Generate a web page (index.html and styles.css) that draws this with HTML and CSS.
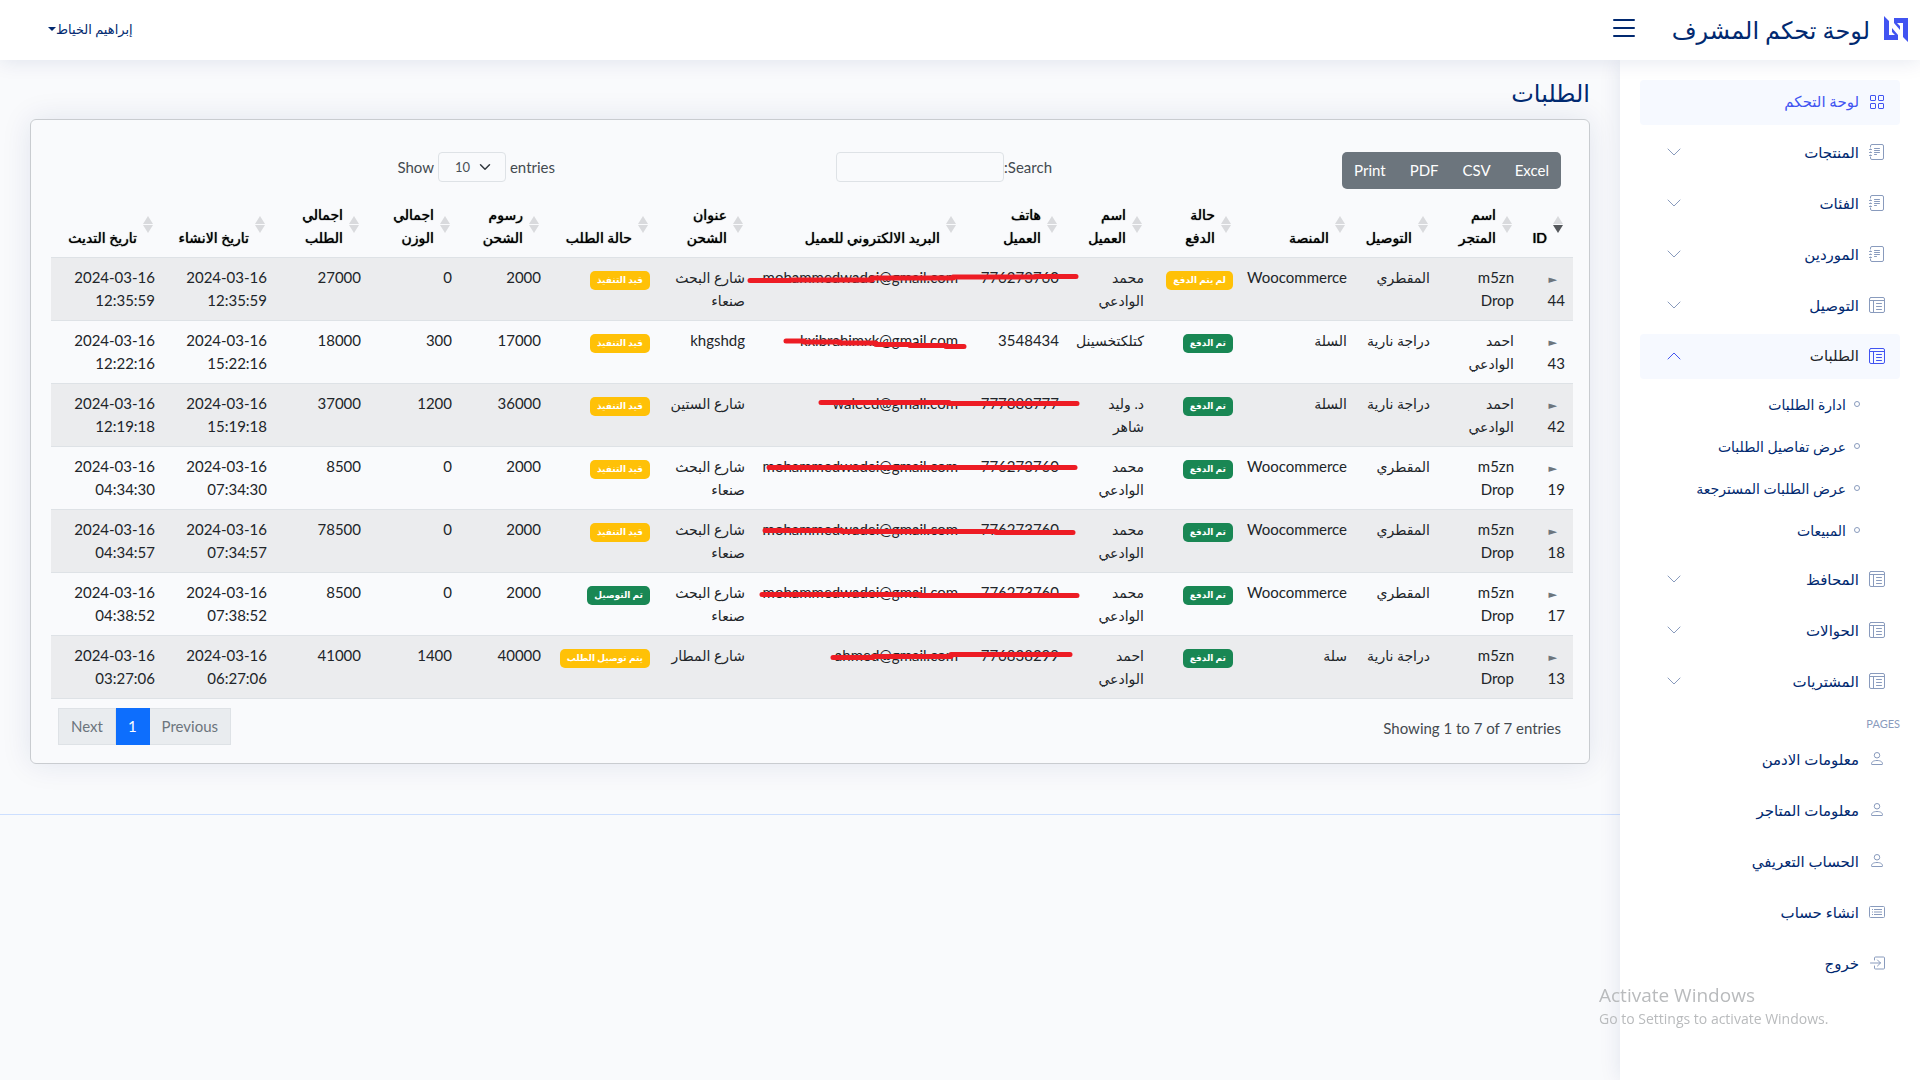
FILE: index.html
```html
<!DOCTYPE html>
<html lang="ar" dir="rtl">
<head>
<meta charset="utf-8">
<title>لوحة تحكم المشرف</title>
<link rel="stylesheet" href="styles.css">
</head>
<body>
<svg class="sprite" aria-hidden="true">
  <symbol id="grid" viewBox="0 0 16 16"><g fill="none" stroke="currentColor"><rect x="1.500" y="1.500" width="5" height="5" rx=".5"/><rect x="9.500" y="1.500" width="5" height="5" rx=".5"/><rect x="1.500" y="9.500" width="5" height="5" rx=".5"/><rect x="9.500" y="9.500" width="5" height="5" rx=".5"/></g></symbol>
  <symbol id="journal" viewBox="0 0 16 16"><path fill="none" stroke="currentColor" stroke-linecap="round" d="M1.500 3V2a1.500 1.500 0 0 1 1.500-1.500h10A1.500 1.500 0 0 1 14.500 2v12a1.500 1.500 0 0 1-1.500 1.500H3A1.500 1.500 0 0 1 1.500 14v-1M1.500 5v.5M1.500 8v.5M1.500 11v.5M.5 5.500h2M.5 8.500h2M.5 11.500h2M5.500 4.500h5M5.500 6.500h5M5.500 8.500h5M5.500 10.500h2"/></symbol>
  <symbol id="layout" viewBox="0 0 16 16"><path fill="none" stroke="currentColor" stroke-linecap="round" d="M2 .5h12A1.500 1.500 0 0 1 15.500 2v12a1.500 1.500 0 0 1-1.500 1.500H2A1.500 1.500 0 0 1 .5 14V2A1.500 1.500 0 0 1 2 .5zM.5 3.500h15M4.500 3.500v12M7.500 6.500h5M7.500 9.500h5M7.500 12.500h5"/></symbol>
  <symbol id="person" viewBox="0 0 16 16"><path fill="none" stroke="currentColor" d="M8 1.500a2.500 2.500 0 1 1 0 5.500 2.500 2.500 0 0 1 0-5.500zM2.500 13c0-2 1.500-3.500 5.500-3.500s5.500 1.500 5.500 3.500c0 .4-.2.500-.5.500H3c-.3 0-.5-.1-.5-.5z"/></symbol>
  <symbol id="card" viewBox="0 0 16 16"><path fill="none" stroke="currentColor" d="M1.500 2.500h13a1 1 0 0 1 1 1v9a1 1 0 0 1-1 1h-13a1 1 0 0 1-1-1v-9a1 1 0 0 1 1-1zM5 5.500h8M5 8h8M5 10.500h8M3 5.500h1M3 8h1M3 10.500h1"/></symbol>
  <symbol id="exit" viewBox="0 0 16 16"><path fill="none" stroke="currentColor" stroke-linecap="round" stroke-linejoin="round" d="M5.500 5V3A1 1 0 0 1 6.500 2h8a1 1 0 0 1 1 1v10a1 1 0 0 1-1 1h-8a1 1 0 0 1-1-1v-2M1.500 8h10M8.500 5l3 3-3 3"/></symbol>
  <symbol id="down" viewBox="0 0 16 16"><path fill="none" stroke="currentColor" stroke-linecap="round" stroke-linejoin="round" d="M2 5l6 6 6-6"/></symbol>
</svg>

<header class="topbar">
  <a class="brand" href="#">
    <svg width="24" height="26" viewBox="0 0 24 26" fill="#4154f1"><path d="M0 0l5 5v14h6l-3-3v-4l6 7v5H0zM24 26l-5-5V7h-6l3 3v4l-6-7V2h14z"/></svg>
    <span>لوحة تحكم المشرف</span>
  </a>
  <button class="toggle" type="button" aria-label="القائمة"><svg width="32" height="32" viewBox="0 0 16 16"><path d="M3 4h10M3 8h10M3 12h10" stroke="currentColor" stroke-linecap="round"/></svg></button>
  <button class="user" type="button">إبراهيم الخياط<i></i></button>
</header>

<div class="layout">
<aside class="sidebar">
  <nav>
    <a class="item current" href="#"><svg><use href="#grid"/></svg>لوحة التحكم</a>
    <a class="item" href="#"><svg><use href="#journal"/></svg>المنتجات<svg class="chev"><use href="#down"/></svg></a>
    <a class="item" href="#"><svg><use href="#journal"/></svg>الفئات<svg class="chev"><use href="#down"/></svg></a>
    <a class="item" href="#"><svg><use href="#journal"/></svg>الموردين<svg class="chev"><use href="#down"/></svg></a>
    <a class="item" href="#"><svg><use href="#layout"/></svg>التوصيل<svg class="chev"><use href="#down"/></svg></a>
    <a class="item open" href="#"><svg><use href="#layout"/></svg>الطلبات<svg class="chev"><use href="#down"/></svg></a>
    <ul class="sub">
      <li><a href="#">ادارة الطلبات</a></li>
      <li><a href="#">عرض تفاصيل الطلبات</a></li>
      <li><a href="#">عرض الطلبات المسترجعة</a></li>
      <li><a href="#">المبيعات</a></li>
    </ul>
    <a class="item" href="#"><svg><use href="#layout"/></svg>المحافظ<svg class="chev"><use href="#down"/></svg></a>
    <a class="item" href="#"><svg><use href="#layout"/></svg>الحوالات<svg class="chev"><use href="#down"/></svg></a>
    <a class="item" href="#"><svg><use href="#layout"/></svg>المشتريات<svg class="chev"><use href="#down"/></svg></a>
    <div class="heading">PAGES</div>
    <a class="item" href="#"><svg><use href="#person"/></svg>معلومات الادمن</a>
    <a class="item" href="#"><svg><use href="#person"/></svg>معلومات المتاجر</a>
    <a class="item" href="#"><svg><use href="#person"/></svg>الحساب التعريفي</a>
    <a class="item" href="#"><svg><use href="#card"/></svg>انشاء حساب</a>
    <a class="item" href="#"><svg><use href="#exit"/></svg>خروج</a>
  </nav>
</aside>

<div class="page">
<main>
  <h1>الطلبات</h1>
  <section class="card">
    <div class="tools">
      <div><div class="buttons"><button type="button">Excel</button><button type="button">CSV</button><button type="button">PDF</button><button type="button">Print</button></div></div>
      <div><label class="search">Search:<input type="search"></label></div>
      <div><label class="length" dir="ltr">Show <select><option>10</option><option>25</option></select> entries</label></div>
    </div>
    <table>
      <colgroup><col style="width:51px"><col style="width:84px"><col style="width:83px"><col style="width:114px"><col style="width:89px"><col style="width:85px"><col style="width:101px"><col style="width:213px"><col style="width:95px"><col style="width:109px"><col style="width:89px"><col style="width:91px"><col style="width:94px"><col style="width:112px"><col style="width:112px"></colgroup>
      <thead><tr><th class="desc">ID</th><th>اسم المتجر</th><th>التوصيل</th><th>المنصة</th><th>حالة الدفع</th><th>اسم العميل</th><th>هاتف العميل</th><th>البريد الالكتروني للعميل</th><th>عنوان الشحن</th><th>حالة الطلب</th><th>رسوم الشحن</th><th>اجمالي الوزن</th><th>اجمالي الطلب</th><th>تاريخ الانشاء</th><th>تاريخ التديث</th></tr></thead>
      <tbody>
        <tr><td><span class="mark">►</span> 44</td><td>m5zn Drop</td><td class="ar">المقطري</td><td>Woocommerce</td><td><span class="badge wait">لم يتم الدفع</span></td><td class="ar">محمد الوادعي</td><td>776273760</td><td class="mail">mohammedwadei@gmail.com<svg class="strike" viewBox="740 0 360 62"><path d="M750 22.500H790V22H872V20H953V19H1035V18.500H1076"/></svg></td><td class="ar">شارع البحث صنعاء</td><td><span class="badge wait">قيد التنفيذ</span></td><td>2000</td><td>0</td><td>27000</td><td>2024-03-16 12:35:59</td><td>2024-03-16 12:35:59</td></tr>
        <tr><td><span class="mark">►</span> 43</td><td class="ar">احمد الوادعي</td><td class="ar">دراجة نارية</td><td class="ar">السلة</td><td><span class="badge done">تم الدفع</span></td><td class="ar">كتلكتخسينل</td><td>3548434</td><td class="mail">kxibrahimxk@gmail.com<svg class="strike" viewBox="740 0 360 62"><path d="M786 20H804V21H840V22H876V23.500H910V24.500H946V25.500H964"/></svg></td><td>khgshdg</td><td><span class="badge wait">قيد التنفيذ</span></td><td>17000</td><td>300</td><td>18000</td><td>2024-03-16 15:22:16</td><td>2024-03-16 12:22:16</td></tr>
        <tr><td><span class="mark">►</span> 42</td><td class="ar">احمد الوادعي</td><td class="ar">دراجة نارية</td><td class="ar">السلة</td><td><span class="badge done">تم الدفع</span></td><td class="ar">د. وليد شاهر</td><td>777888777</td><td class="mail">waleed@gmail.com<svg class="strike" viewBox="740 0 360 62"><path d="M821 18.500H949V19.500H1077"/></svg></td><td class="ar">شارع الستين</td><td><span class="badge wait">قيد التنفيذ</span></td><td>36000</td><td>1200</td><td>37000</td><td>2024-03-16 15:19:18</td><td>2024-03-16 12:19:18</td></tr>
        <tr><td><span class="mark">►</span> 19</td><td>m5zn Drop</td><td class="ar">المقطري</td><td>Woocommerce</td><td><span class="badge done">تم الدفع</span></td><td class="ar">محمد الوادعي</td><td>776273760</td><td class="mail">mohammedwadei@gmail.com<svg class="strike" viewBox="740 0 360 62"><path d="M769 20.500H1075"/></svg></td><td class="ar">شارع البحث صنعاء</td><td><span class="badge wait">قيد التنفيذ</span></td><td>2000</td><td>0</td><td>8500</td><td>2024-03-16 07:34:30</td><td>2024-03-16 04:34:30</td></tr>
        <tr><td><span class="mark">►</span> 18</td><td>m5zn Drop</td><td class="ar">المقطري</td><td>Woocommerce</td><td><span class="badge done">تم الدفع</span></td><td class="ar">محمد الوادعي</td><td>776273760</td><td class="mail">mohammedwadei@gmail.com<svg class="strike" viewBox="740 0 360 62"><path d="M765 20.500H842V21.500H996V22.500H1073"/></svg></td><td class="ar">شارع البحث صنعاء</td><td><span class="badge wait">قيد التنفيذ</span></td><td>2000</td><td>0</td><td>78500</td><td>2024-03-16 07:34:57</td><td>2024-03-16 04:34:57</td></tr>
        <tr><td><span class="mark">►</span> 17</td><td>m5zn Drop</td><td class="ar">المقطري</td><td>Woocommerce</td><td><span class="badge done">تم الدفع</span></td><td class="ar">محمد الوادعي</td><td>776273760</td><td class="mail">mohammedwadei@gmail.com<svg class="strike" viewBox="740 0 360 62"><path d="M762 21.500H920V22.500H1077"/></svg></td><td class="ar">شارع البحث صنعاء</td><td><span class="badge done">تم التوصيل</span></td><td>2000</td><td>0</td><td>8500</td><td>2024-03-16 07:38:52</td><td>2024-03-16 04:38:52</td></tr>
        <tr><td><span class="mark">►</span> 13</td><td>m5zn Drop</td><td class="ar">دراجة نارية</td><td class="ar">سلة</td><td><span class="badge done">تم الدفع</span></td><td class="ar">احمد الوادعي</td><td>776838299</td><td class="mail">ahmed@gmail.com<svg class="strike" viewBox="740 0 360 62"><path d="M833 21.500H873V20.500H951V18.500H1070"/></svg></td><td class="ar">شارع المطار</td><td><span class="badge wait">يتم توصيل الطلب</span></td><td>40000</td><td>1400</td><td>41000</td><td>2024-03-16 06:27:06</td><td>2024-03-16 03:27:06</td></tr>
      </tbody>
    </table>
    <div class="foot">
      <p dir="ltr">Showing 1 to 7 of 7 entries</p>
      <div class="pager"><button type="button" disabled>Previous</button><button class="on" type="button">1</button><button type="button" disabled>Next</button></div>
    </div>
  </section>
</main>
<footer></footer>
</div>
</div>
<div class="watermark" dir="ltr"><p>Activate Windows</p><p>Go to Settings to activate Windows.</p></div>
</body>
</html>
```
FILE: styles.css
```css
*, *::before, *::after { box-sizing: border-box; }
body { margin: 0; min-height: 100vh; display: flex; flex-direction: column; background: #f9fafc; color: #212529; font: 15px/23px Lato, "DejaVu Sans", sans-serif; }
button, input, select { font: inherit; }
a { text-decoration: none; }
.sprite { position: absolute; width: 0; height: 0; }

.topbar { position: relative; z-index: 2; display: flex; align-items: center; height: 60px; padding: 0 12px 2px 48px; background: #fff; box-shadow: 0 2px 20px rgba(1, 41, 112, .1); }
.brand { display: flex; align-items: center; gap: 14px; width: 248px; color: #012970; font-size: 24px; font-weight: 500; white-space: nowrap; }
.brand svg { flex: none; }
.toggle { display: flex; margin-right: 20px; padding: 0 0 2px; border: 0; background: none; color: #012970; }
.user { display: flex; align-items: center; margin-right: auto; padding: 0; border: 0; background: none; color: #012970; font-size: 13px; }
.user i { border: 4px solid transparent; border-top-color: #012970; border-bottom: 0; }

.layout { display: flex; flex: 1; }
.sidebar { flex: none; width: 300px; padding: 20px; background: #fff; box-shadow: 0 0 20px rgba(1, 41, 112, .1); z-index: 1; }
.sidebar nav { display: flex; flex-direction: column; gap: 5px; }
.item { display: flex; align-items: center; gap: 10px; height: 46px; padding: 0 15px 2px 26px; border-radius: 4px; color: #012970; font-weight: 500; }
.item svg { flex: none; width: 16px; height: 16px; color: #899bbd; }
.item .chev { margin-right: auto; }
.current, .open { height: 45px; background: #f6f9ff; }
.current, .current svg, .open svg { color: #4154f1; }
.open { color: #212529; }
.open .chev { transform: rotate(180deg); }
.sub { margin: -1px 0 0; padding: 0 40px 1px 0; list-style: none; }
.sub a { display: flex; align-items: center; gap: 8px; height: 42px; color: #012970; font-size: 14px; }
.sub a::before { content: ""; width: 6px; height: 6px; border: 1px solid #899bbd; border-radius: 50%; }
.heading { height: 22px; padding-top: 2px; color: #899bbd; font-size: 11px; line-height: 23px; }

.page { flex: 1; min-width: 0; }
main { padding: 20px 30px; }
h1 { margin: 0; height: 39px; color: #012970; font-size: 24px; font-weight: 500; line-height: 26px; }
.card { padding: 32px 16px 18px 20px; border: 1px solid #c9ccd0; border-radius: 6px; box-shadow: 0 0 30px rgba(1, 41, 112, .1); }
.tools { display: grid; grid-template-columns: 509fr 497fr 504fr; margin-right: 12px; color: #444a50; }
.buttons { display: inline-flex; border-radius: 5px; overflow: hidden; background: #6c757d; }
.buttons button { height: 37px; padding: 0 12px; border: 0; background: none; color: #fff; }
.search, .length { display: inline-flex; align-items: center; }
.search input { width: 168px; height: 30px; border: 1px solid #dee2e6; border-radius: 4px; background: transparent; }
.length { gap: 4px; }
.length select { width: 68px; height: 30px; padding: 0 16px; appearance: none; border: 1px solid #dee2e6; border-radius: 4px; color: #495057; font-size: 13px; background: url("data:image/svg+xml,%3Csvg xmlns='http://www.w3.org/2000/svg' viewBox='0 0 16 16'%3E%3Cpath fill='none' stroke='%23343a40' stroke-width='2' stroke-linecap='round' stroke-linejoin='round' d='M2 5l6 6 6-6'/%3E%3C/svg%3E") no-repeat right 14px center / 12px; }

table { width: 100%; margin-top: 5px; table-layout: fixed; border-collapse: collapse; }
th, td { padding: 8px; border-bottom: 1px solid #dee2e6; text-align: right; vertical-align: top; }
th { position: relative; height: 63px; padding-right: 26px; vertical-align: bottom; color: #000; font-size: 14px; font-weight: 500; text-shadow: 0 0 1px #000; }
th::before, th::after { content: ""; position: absolute; right: 10px; border: 5px solid transparent; }
th::before { top: 22px; border-top: 0; border-bottom: 8px solid #d9dadd; }
th::after { top: 31px; border-bottom: 0; border-top: 8px solid #d9dadd; }
.desc::after { border-top-color: #55585c; }
tbody tr:nth-child(odd) { background: #ebecee; }
.ar { font-size: 14px; }
.mark { margin-right: 8px; color: #6c757d; font-size: 11px; line-height: 1; }
.mail { position: relative; direction: ltr; }
.strike { position: absolute; z-index: 1; top: 0; right: -134px; width: 360px; height: 62px; }
.strike path { fill: none; stroke: #ed1c24; stroke-width: 5; stroke-linecap: round; stroke-linejoin: round; }
.badge { display: inline-block; height: 19px; padding: 0 7px; border-radius: 5px; color: #fff; font-size: 9px; font-weight: 700; line-height: 17px; white-space: nowrap; }
.wait { background: #ffc107; }
.done { background: #198754; }

.foot { display: flex; justify-content: space-between; align-items: flex-start; padding: 9px 12px 0 7px; }
.foot p { margin: 9px 0 0; color: #444a50; }
.pager { display: flex; }
.pager button { height: 37px; padding: 0 12px; border: 1px solid #dee2e6; background: #e9ecef; color: #6c757d; }
.pager .on { margin: 0 -1px; border-color: #0d6efd; background: #0d6efd; color: #fff; }
footer { margin-top: 30px; border-top: 1px solid #cddfff; }

.watermark { position: fixed; z-index: 3; right: 84px; bottom: 50px; width: 237px; color: #b9bbbd; font-family: "Open Sans", sans-serif; font-size: 14px; white-space: nowrap; pointer-events: none; }
.watermark p { margin: 0; }
.watermark p:first-child { font-size: 19px; }
```
